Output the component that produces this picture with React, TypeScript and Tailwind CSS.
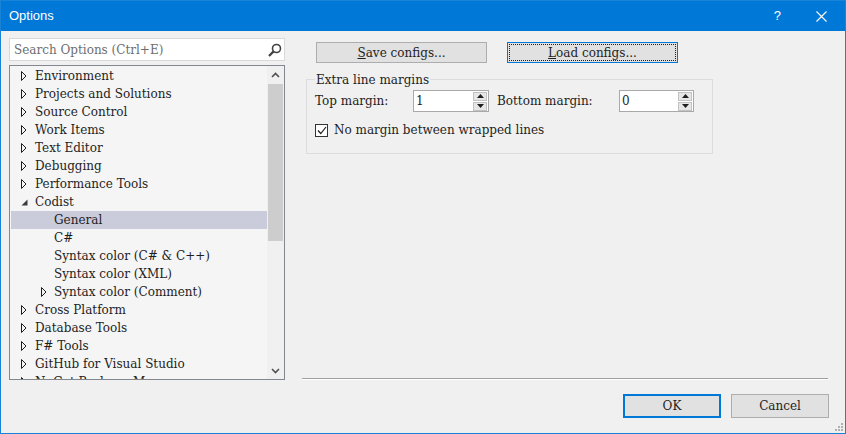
import React from "react";

type Node = { label: string; level: number; arrow: "c" | "e" | "n"; selected?: boolean };

const nodes: Node[] = [
  { label: "Environment", level: 0, arrow: "c" },
  { label: "Projects and Solutions", level: 0, arrow: "c" },
  { label: "Source Control", level: 0, arrow: "c" },
  { label: "Work Items", level: 0, arrow: "c" },
  { label: "Text Editor", level: 0, arrow: "c" },
  { label: "Debugging", level: 0, arrow: "c" },
  { label: "Performance Tools", level: 0, arrow: "c" },
  { label: "Codist", level: 0, arrow: "e" },
  { label: "General", level: 1, arrow: "n", selected: true },
  { label: "C#", level: 1, arrow: "n" },
  { label: "Syntax color (C# & C++)", level: 1, arrow: "n" },
  { label: "Syntax color (XML)", level: 1, arrow: "n" },
  { label: "Syntax color (Comment)", level: 1, arrow: "c" },
  { label: "Cross Platform", level: 0, arrow: "c" },
  { label: "Database Tools", level: 0, arrow: "c" },
  { label: "F# Tools", level: 0, arrow: "c" },
  { label: "GitHub for Visual Studio", level: 0, arrow: "c" },
  { label: "NuGet Package Manager", level: 0, arrow: "c" },
];

function Arrow({ kind }: { kind: "c" | "e" | "n" }) {
  if (kind === "c")
    return (
      <svg width="6" height="10" viewBox="0 0 6 10" className="block">
        <polygon points="0.5,0.5 5,5 0.5,9.5" fill="none" stroke="#1e1e1e" strokeWidth="1" />
      </svg>
    );
  if (kind === "e")
    return (
      <svg width="7" height="7" viewBox="0 0 7 7" className="block">
        <polygon points="6.5,0.5 6.5,6.5 0.5,6.5" fill="#3c3c3c" />
      </svg>
    );
  return null;
}

function TreeRow({ n }: { n: Node }) {
  return (
    <div
      className={`flex h-[18px] items-center whitespace-nowrap text-[12px] text-[#1e1e1e] ${
        n.selected ? "bg-[#cbccdb]" : ""
      } ${n.level === 0 ? "pl-[10px]" : "pl-[30px]"}`}
    >
      <span className="flex w-[14px] items-center">
        <Arrow kind={n.arrow} />
      </span>
      <span className={n.level === 1 ? "ml-[-1px]" : ""}>{n.label}</span>
    </div>
  );
}

function SpinBox({ value, wide }: { value: string; wide: boolean }) {
  return (
    <div
      className={`flex h-[22px] items-center border border-[#a9a9a9] bg-white pl-[2px] pr-[1px] ${
        wide ? "w-[76px]" : "w-[75px]"
      }`}
    >
      <span className="flex-1 text-[12px] text-[#1e1e1e]">{value}</span>
      <div className="flex flex-col gap-[1px]">
        <div className="flex h-[9px] w-[14px] items-center justify-center border border-[#c2c2c2] bg-[#e6e6e6]">
          <svg width="7" height="4" viewBox="0 0 7 4">
            <polygon points="3.5,0 7,4 0,4" fill="#1e1e1e" />
          </svg>
        </div>
        <div className="flex h-[9px] w-[14px] items-center justify-center border border-[#c2c2c2] bg-[#e6e6e6]">
          <svg width="7" height="4" viewBox="0 0 7 4">
            <polygon points="0,0 7,0 3.5,4" fill="#1e1e1e" />
          </svg>
        </div>
      </div>
    </div>
  );
}

export default function App() {
  return (
    <div className="relative flex h-[434px] w-[846px] flex-col overflow-hidden border border-[#1883d7] bg-[#f0f0f0] font-['DejaVu_Serif','Liberation_Serif',serif]">
      {/* Title bar */}
      <div className="flex h-[30px] shrink-0 items-center bg-[#0078d7] text-white font-['Liberation_Sans','Noto_Sans',sans-serif]">
        <span className="ml-[8px] text-[13px]">Options</span>
        <div className="flex-1" />
        <span className="mr-[35px] text-[13px]">?</span>
        <svg width="11" height="11" viewBox="0 0 11 11" className="mr-[18px]">
          <path d="M0.5 0.5 L10.5 10.5 M10.5 0.5 L0.5 10.5" stroke="white" strokeWidth="1.1" />
        </svg>
      </div>

      {/* Body */}
      <div className="flex flex-1">
        {/* Left column */}
        <div className="ml-[8px] flex w-[276px] flex-col pt-[7px]">
          <div className="flex h-[23px] items-center border border-[#d9d9d9] bg-white pl-[4px] pr-[2px]">
            <span className="flex-1 text-[12px] text-[#6d6d6d]">Search Options (Ctrl+E)</span>
            <svg width="14" height="14" viewBox="0 0 14 14">
              <circle cx="8.5" cy="5.5" r="4" fill="none" stroke="#424242" strokeWidth="1.6" />
              <path d="M5.6 8.4 L1 13" stroke="#424242" strokeWidth="2.2" />
            </svg>
          </div>
          <div className="mt-[4px] flex h-[315px] border border-[#828790] bg-[#f5f5f5]">
            <div className="flex-1 overflow-hidden pl-[1px] pt-[1px]">
              {nodes.map((n) => (
                <TreeRow key={n.label} n={n} />
              ))}
            </div>
            <div className="flex w-[17px] flex-col items-center bg-[#f0f0f0]">
              <div className="flex h-[17px] w-full items-center justify-center">
                <svg width="9" height="6" viewBox="0 0 9 6">
                  <path d="M1 5 L4.5 1.5 L8 5" fill="none" stroke="#505050" strokeWidth="1.6" />
                </svg>
              </div>
              <div className="mt-[1px] h-[157px] w-[15px] bg-[#cdcdcd]" />
              <div className="flex-1" />
              <div className="flex h-[17px] w-full items-center justify-center">
                <svg width="9" height="6" viewBox="0 0 9 6">
                  <path d="M1 1 L4.5 4.5 L8 1" fill="none" stroke="#505050" strokeWidth="1.6" />
                </svg>
              </div>
            </div>
          </div>
        </div>

        {/* Right column */}
        <div className="ml-[17px] flex w-[527px] flex-col pt-[11px]">
          <div className="flex gap-[20px] pl-[14px]">
            <div className="flex h-[21px] w-[171px] items-center justify-center border border-[#adadad] bg-[#e1e1e1] text-[12px] text-[#1e1e1e]">
              <span>
                <span className="underline">S</span>ave configs...
              </span>
            </div>
            <div className="flex h-[21px] w-[171px] items-center justify-center border border-[#0078d7] bg-[#e1e1e1] p-[1px] text-[12px] text-[#1e1e1e]">
              <div className="flex h-full w-full items-center justify-center border border-dotted border-[#1e1e1e]">
                <span>
                  <span className="underline">L</span>oad configs...
                </span>
              </div>
            </div>
          </div>

          <div className="relative ml-[4px] mt-[16px] h-[75px] w-[407px] border border-[#dcdcdc] pl-[8px] pt-[10px]">
            <span className="absolute left-[8px] top-[-9px] bg-[#f0f0f0] px-[1px] text-[12px] text-[#1e1e1e]">
              Extra line margins
            </span>
            <div className="flex items-center text-[12px] text-[#1e1e1e]">
              <span className="w-[98px]">Top margin:</span>
              <SpinBox value="1" wide={true} />
              <span className="ml-[8px] w-[122px]">Bottom margin:</span>
              <SpinBox value="0" wide={false} />
            </div>
            <div className="mt-[9px] flex items-center text-[12px] text-[#1e1e1e]">
              <div className="flex h-[13px] w-[13px] items-center justify-center border border-[#333333] bg-white">
                <svg width="10" height="9" viewBox="0 0 10 9">
                  <path d="M1 4.5 L3.8 7.5 L9 1" fill="none" stroke="#1e1e1e" strokeWidth="1.2" />
                </svg>
              </div>
              <span className="ml-[6px]">No margin between wrapped lines</span>
            </div>
          </div>

          <div className="flex-1" />
          <div className="h-[1px] w-[526px] bg-[#a0a0a0]" />
          <div className="h-[1px] w-[526px] bg-white" />
          <div className="mt-[14px] flex justify-end gap-[10px] pb-[15px]">
            <div className="flex h-[24px] w-[98px] items-center justify-center border-2 border-[#0078d7] bg-[#e1e1e1] text-[12px] text-[#1e1e1e]">
              OK
            </div>
            <div className="flex h-[24px] w-[98px] items-center justify-center border border-[#adadad] bg-[#e1e1e1] text-[12px] text-[#1e1e1e]">
              Cancel
            </div>
          </div>
        </div>
      </div>

      {/* resize grip */}
      <svg width="8" height="8" viewBox="0 0 8 8" className="absolute bottom-[2px] right-[2px]">
        <rect x="6" y="0" width="2" height="2" fill="#b0b0b0" />
        <rect x="3" y="3" width="2" height="2" fill="#b0b0b0" />
        <rect x="6" y="3" width="2" height="2" fill="#b0b0b0" />
        <rect x="0" y="6" width="2" height="2" fill="#b0b0b0" />
        <rect x="3" y="6" width="2" height="2" fill="#b0b0b0" />
        <rect x="6" y="6" width="2" height="2" fill="#b0b0b0" />
      </svg>
    </div>
  );
}
